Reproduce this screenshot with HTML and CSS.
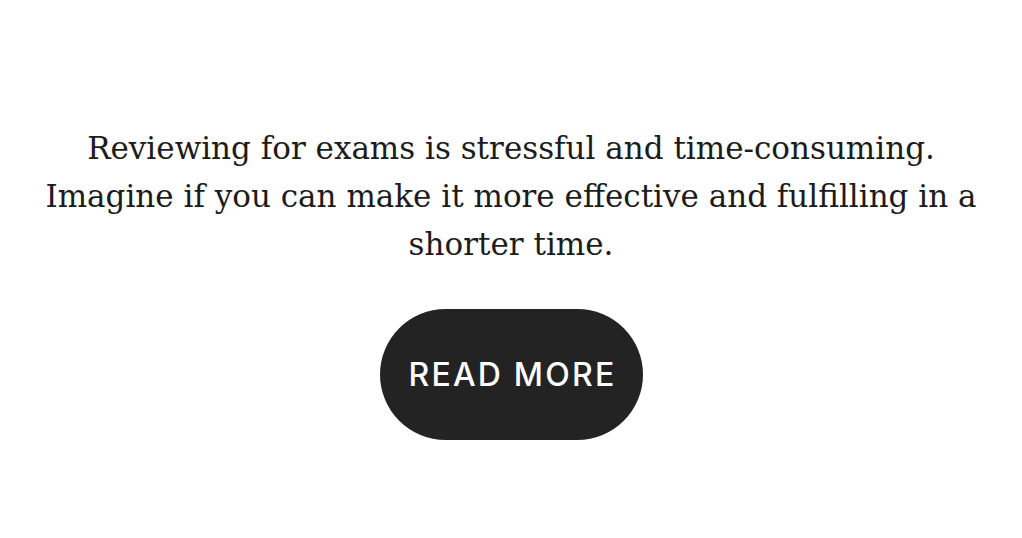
FILE: index.html
```html
<!DOCTYPE html>
<html>
<head>
<meta charset="utf-8">
<link rel="stylesheet" href="styles.css">
</head>
<body>
<main class="hero">
  <p class="lead">Reviewing for exams is stressful and time-consuming.<br>Imagine if you can make it more effective and fulfilling in a shorter time.</p>
  <a class="btn" href="#">READ MORE</a>
</main>
</body>
</html>
```
FILE: styles.css
```css
html, body {
  margin: 0;
  padding: 0;
  background: #ffffff;
}
.hero {
  width: 1022px;
  height: 538px;
  display: flex;
  flex-direction: column;
  align-items: center;
  padding-top: 124px;
  box-sizing: border-box;
}
.lead {
  margin: 0;
  width: 980px;
  text-align: center;
  font-family: "DejaVu Serif", serif;
  font-size: 31px;
  line-height: 48px;
  color: #1c1c1c;
}
.btn {
  margin-top: 41px;
  width: 263px;
  height: 131px;
  border-radius: 66px;
  background: #232323;
  color: #ffffff;
  display: flex;
  align-items: center;
  justify-content: center;
  text-decoration: none;
  font-family: "Inter", sans-serif;
  font-weight: 500;
  font-size: 32px;
  letter-spacing: 2.2px;
  padding-left: 3px;
  box-sizing: border-box;
}
```
